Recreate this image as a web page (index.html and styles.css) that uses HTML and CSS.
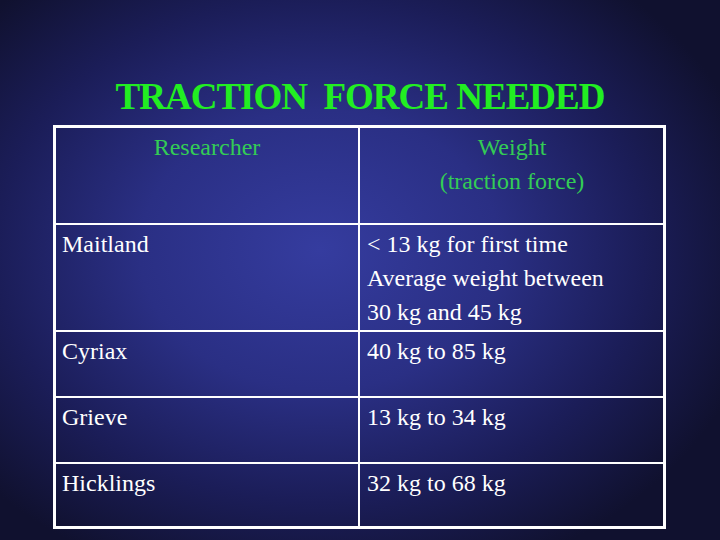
FILE: index.html
```html
<!DOCTYPE html>
<html>
<head>
<meta charset="utf-8">
<link rel="stylesheet" href="styles.css">
</head>
<body>
<div class="slide">
  <h1 class="title">TRACTION&nbsp; FORCE NEEDED</h1>
  <div class="grid">
    <div class="cell head left">Researcher</div>
    <div class="cell head right">Weight<br>(traction force)</div>
    <div class="cell left">Maitland</div>
    <div class="cell right">&lt; 13 kg for first time<br>Average weight between<br>30 kg and 45 kg</div>
    <div class="cell left">Cyriax</div>
    <div class="cell right">40 kg to 85 kg</div>
    <div class="cell left">Grieve</div>
    <div class="cell right">13 kg to 34 kg</div>
    <div class="cell left last">Hicklings</div>
    <div class="cell right last">32 kg to 68 kg</div>
  </div>
</div>
</body>
</html>
```

FILE: styles.css
```css
html, body {
  margin: 0;
  padding: 0;
}
body {
  width: 720px;
  height: 540px;
  overflow: hidden;
  background: radial-gradient(ellipse 450px 350px at 320px 250px, #353c9f 0%, #2a2f84 40%, #1b1d58 72%, #10112f 100%);
  font-family: "Liberation Serif", "Times New Roman", serif;
}
.slide {
  padding-top: 75px;
  display: flex;
  flex-direction: column;
}
.title {
  margin: 0;
  font-size: 37px;
  line-height: 44px;
  font-weight: bold;
  letter-spacing: -1px;
  color: #22ee22;
  text-align: center;
}
.grid {
  margin: 6px 0 0 53px;
  width: 613px;
  box-sizing: border-box;
  border: 3px solid #ffffff;
  display: grid;
  grid-template-columns: 304px 303px;
  grid-template-rows: 97px 107px 66px 66px 62px;
}
.cell {
  box-sizing: border-box;
  border-bottom: 2px solid #ffffff;
  color: #ffffff;
  font-size: 24px;
  line-height: 34px;
  padding: 2px 6px 0 6px;
}
.cell.left {
  border-right: 2px solid #ffffff;
}
.cell.right {
  padding-left: 7px;
}
.cell.last {
  border-bottom: none;
}
.cell.head {
  color: #33cc55;
  text-align: center;
}
```
